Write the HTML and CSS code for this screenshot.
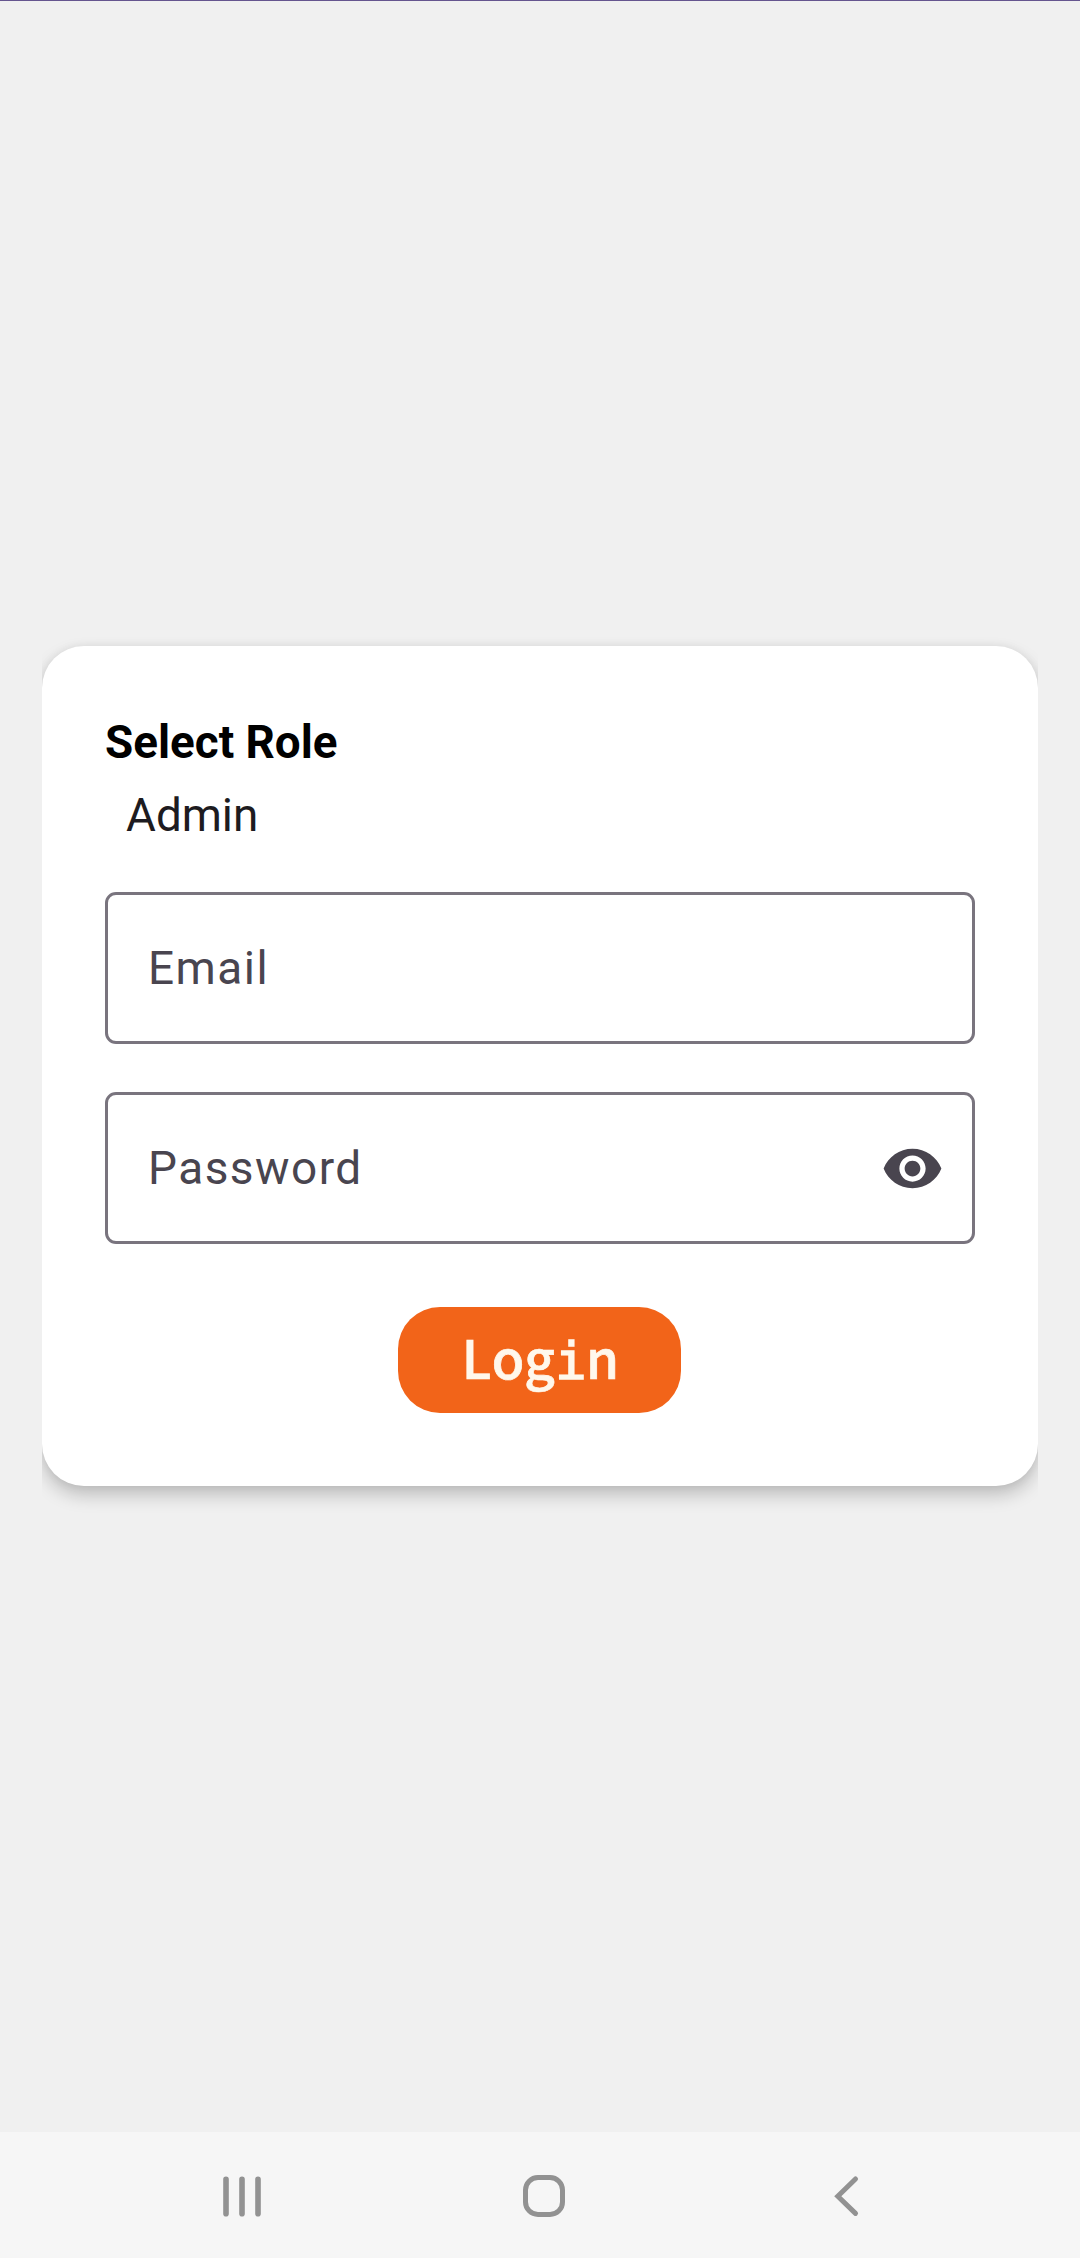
FILE: index.html
```
<!DOCTYPE html>
<html lang="en">
<head>
<meta charset="utf-8">
<title>Login</title>
<link rel="stylesheet" href="styles.css">
</head>
<body>
<div class="screen">
  <main class="content">
    <form class="card">
      <div class="role-label">Select Role</div>
      <div class="role-value">Admin</div>
      <div class="field"><span>Email</span></div>
      <div class="field"><span>Password</span>
        <svg class="eye" viewBox="0 0 24 24"><path d="M12 4.5C7 4.5 2.73 7.61 1 12c1.73 4.39 6 7.5 11 7.5s9.27-3.11 11-7.5c-1.73-4.39-6-7.5-11-7.5zM12 17c-2.76 0-5-2.24-5-5s2.24-5 5-5 5 2.24 5 5-2.24 5-5 5zm0-8c-1.66 0-3 1.34-3 3s1.34 3 3 3 3-1.34 3-3-1.34-3-3-3z"/></svg>
      </div>
      <button class="login" type="button"><span class="mono"><span>L</span><span>o</span><span>g</span><span class="slab">i</span><span>n</span></span></button>
    </form>
  </main>
  <nav class="navbar">
    <svg viewBox="0 0 60 60"><path d="M14 13.2v34.6M30 13.2v34.6M46 13.2v34.6" stroke-width="5.6"/></svg>
    <svg viewBox="0 0 60 60"><rect x="11.5" y="11.5" width="37" height="37" rx="12.5" stroke-width="5"/></svg>
    <svg viewBox="0 0 60 60"><path d="M39.5 13 21.8 30.2 39.5 47.4" stroke-width="5"/></svg>
  </nav>
</div>
</body>
</html>
```
FILE: styles.css
```
body {
  margin: 0;
  font-family: Roboto, sans-serif;
}
.screen {
  box-sizing: border-box;
  height: 2258px;
  display: flex;
  flex-direction: column;
  background: #f0f0f0;
  border-top: 1px solid #65558f;
}
.content {
  flex: 1;
  padding: 645px 42px 0;
}
.card {
  box-sizing: border-box;
  height: 840px;
  padding: 70px 63px 0;
  display: flex;
  flex-direction: column;
  background: #fff;
  border-radius: 42px;
  box-shadow: 0 9px 18px rgba(0, 0, 0, .21), 0 0 10px rgba(0, 0, 0, .06);
  clip-path: inset(-40px 0);
}
.role-label {
  font-size: 45.8px;
  line-height: 54px;
  font-weight: 700;
  color: #000;
}
.role-value {
  margin: 19px 0 49px 21px;
  font-size: 45.8px;
  line-height: 54px;
  color: #1d1b20;
}
.field {
  box-sizing: border-box;
  height: 152px;
  margin-bottom: 48px;
  padding: 0 28px 0 40px;
  display: flex;
  align-items: center;
  justify-content: space-between;
  border: 3px solid #79747e;
  border-radius: 11px;
  font-size: 45.9px;
  letter-spacing: 1.5px;
  color: #49454f;
}
.eye {
  width: 63px;
  height: 63px;
  fill: #49454f;
}
.login {
  align-self: center;
  width: 283px;
  height: 106px;
  margin: 15px 1px 0 0;
  padding: 0 0 4px;
  border: 0;
  border-radius: 42px;
  background: #f26419;
  color: #fff8ec;
  font: 500 53px/80px "Noto Sans CJK SC", sans-serif;
  -webkit-text-stroke: .7px #fff8ec;
}
.mono {
  display: inline-grid;
  grid-template-columns: repeat(5, 31.5px);
  justify-items: center;
  align-items: baseline;
}
.slab {
  font-family: "DejaVu Sans Mono", monospace;
  font-size: 52px;
  -webkit-text-stroke-width: 1.6px;
}
.navbar {
  height: 126px;
  padding: 1px 204px 0 212px;
  box-sizing: border-box;
  display: flex;
  align-items: center;
  justify-content: space-between;
  background: #f6f6f6;
}
.navbar svg {
  width: 60px;
  height: 60px;
  fill: none;
  stroke: #929292;
  stroke-linecap: round;
}
```
